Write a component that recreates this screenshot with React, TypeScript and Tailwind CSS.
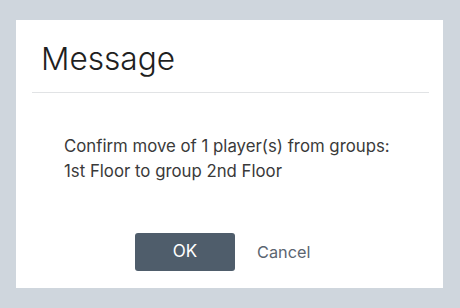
export default function App() {
    return (
        <div className="h-[308px] w-[460px] bg-[#cfd6dd] pt-[20px] pl-[16px] font-['Inter',sans-serif]">
            <div className="flex h-[268px] w-[427px] flex-col bg-white">
                {/* Header */}
                <div className="px-[25px] pt-[19px] pb-[13px]">
                    <h1 className="text-[31.6px] leading-[40px] font-light text-[#1f1f1f]">Message</h1>
                </div>
                <div className="ml-[16px] mr-[14px] h-px bg-[#e1e3e5]" />

                {/* Body */}
                <div className="pl-[48px] pt-[41px] text-[16.8px] leading-[25px] text-[#3a3a3a]">
                    <p>Confirm move of 1 player(s) from groups:</p>
                    <p>1st Floor to group 2nd Floor</p>
                </div>

                {/* Actions */}
                <div className="mt-[49px] flex items-center gap-[22px] pl-[119px]">
                    <button className="h-[38px] w-[100px] rounded-[3px] bg-[#4f5d6b] text-[17px] text-white">
                        OK
                    </button>
                    <button className="text-[16.3px] text-[#5b6570]">Cancel</button>
                </div>
            </div>
        </div>
    );
}
